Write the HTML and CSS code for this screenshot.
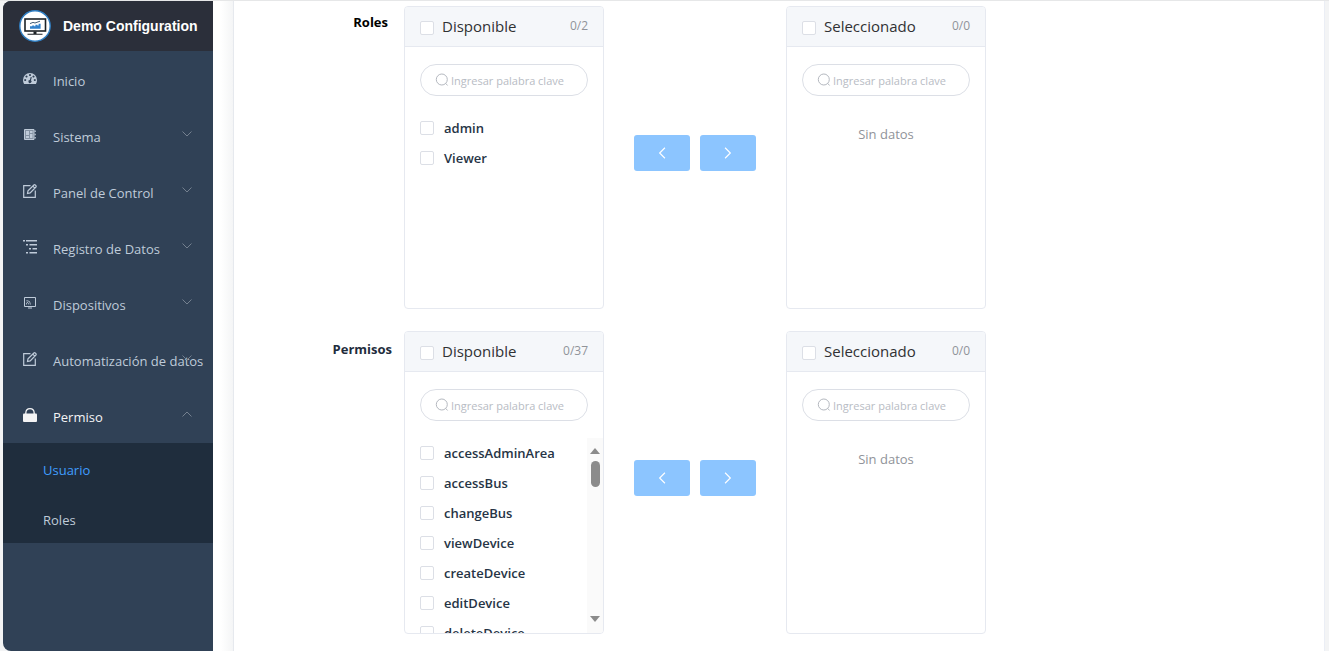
FILE: index.html
```html
<!DOCTYPE html>
<html lang="es">
<head>
  <meta charset="UTF-8" />
  <meta name="viewport" content="width=device-width, initial-scale=1.0"/>
  <title>Demo Configuration</title>
  <link rel="stylesheet" href="styles.css">
</head>
<body>
  <svg class="sprite" xmlns="http://www.w3.org/2000/svg">
    <symbol id="arrow" viewBox="0 0 12 12"><path d="M1.500 3.500 6 8l4.500-4.500" fill="none" stroke="currentColor"/></symbol>
    <symbol id="edit" viewBox="0 0 14 14"><path d="M7.500 1.700H.7v11.600h11.600V6.500M4.500 9.500l.5-2.700L10.900 1q.7-.6 1.300 0l.7.7q.6.6 0 1.300L7.200 8.900zM9.800 2.200l2 2" fill="none" stroke="currentColor" stroke-width="1.200"/></symbol>
    <symbol id="search" viewBox="0 0 14 14"><circle cx="6.800" cy="6.500" r="5.500" fill="none" stroke="currentColor"/><path d="m10.600 10.300 2 2.200" stroke="currentColor"/></symbol>
  </svg>

  <div class="app">
    <aside class="sidebar">
      <a class="brand" href="#">
        <svg class="logo" viewBox="0 0 32 32">
          <circle cx="16" cy="16" r="15.200" fill="#fff" stroke="#2f7fc4" stroke-width="1.400"/>
          <rect x="6" y="9" width="20.500" height="12" fill="#fff" stroke="#1d2226" stroke-width="1.600"/>
          <path d="M14.500 21.500h3V24h-3zM8.500 23.700h15v1h-15z" fill="#1d2226"/>
          <path d="M11 18.800v-2.600h2.200v-.8h2v.8h1.200v-1.400h2v.8h1.200v-1.800h2v5z" fill="#3181cc"/>
          <path d="m11 13.600 3-1.200 2 .6 5-1.800" fill="none" stroke="#2b4966" stroke-width=".9"/>
        </svg>
        <h1>Demo Configuration</h1>
      </a>
      <nav>
        <a class="item" href="#">
          <svg class="icon" viewBox="0 0 16 16"><path fill="currentColor" fill-rule="evenodd" d="M8 1a8 8 0 0 0-8 8q0 2.600 1.200 4.600h13.600Q16 11.600 16 9a8 8 0 0 0-8-8zM8 2.300a1.200 1.200 0 1 0 .01 0zM4 3.900a1.200 1.200 0 1 0 .01 0zM12 3.900a1.200 1.200 0 1 0 .01 0zM2.500 7.900a1.200 1.200 0 1 0 .01 0zM13.500 7.900a1.200 1.200 0 1 0 .01 0zM8.800 5.800l-1 3.300a1.800 1.800 0 1 0 1.300.4l1-3.400z"/></svg>
          <span>Inicio</span>
        </a>
        <a class="item" href="#">
          <svg class="icon" viewBox="0 0 14 14"><path d="M1.500 1.500h9.500v10H1.500z" fill="#8593a4" stroke="currentColor"/><path d="M3 3h3v4H3zM7 3h2.500v2H7zM7 6h2.500v4H7zM3 8h3v2H3zM11.500 2.500h1.300V4h-1.300zM11.500 5.700h1.300v1.500h-1.300zM11.500 9h1.300v1.500h-1.300z" fill="currentColor"/></svg>
          <span>Sistema</span>
          <svg class="arrow"><use href="#arrow"/></svg>
        </a>
        <a class="item" href="#">
          <svg class="icon"><use href="#edit"/></svg>
          <span>Panel de Control</span>
          <svg class="arrow"><use href="#arrow"/></svg>
        </a>
        <a class="item" href="#">
          <svg class="icon" viewBox="0 0 14 14"><path d="M0 0h2v1.500H0zM3 0h11v1.500H3zM3 4h2v1.500H3zM6.500 4H14v1.500H6.500zM6 8h2v1.500H6zM9.500 8H14v1.500H9.500zM3 12h2v1.500H3zM6.500 12H14v1.500H6.500z" fill="currentColor"/></svg>
          <span>Registro de Datos</span>
          <svg class="arrow"><use href="#arrow"/></svg>
        </a>
        <a class="item" href="#">
          <svg class="icon" viewBox="0 0 14 14"><path d="M1.500 1.500h11v9h-11zM5 12h4" fill="none" stroke="currentColor"/><path d="M3.500 8.500V7M3.500 4.500q4 0 4 4M3.500 6q2 .3 2.300 2.500" fill="none" stroke="currentColor" stroke-width=".8"/></svg>
          <span>Dispositivos</span>
          <svg class="arrow"><use href="#arrow"/></svg>
        </a>
        <a class="item" href="#">
          <svg class="icon"><use href="#edit"/></svg>
          <span>Automatización de datos</span>
          <svg class="arrow"><use href="#arrow"/></svg>
        </a>
        <a class="item open" href="#">
          <svg class="icon" viewBox="0 0 14 14"><path d="M1 5.500h12q1 0 1 1V13q0 1-1 1H1q-1 0-1-1V6.500q0-1 1-1z" fill="currentColor"/><path d="M2.800 6V5Q3 .7 7 .7T11.200 5v1" fill="none" stroke="currentColor" stroke-width="1.300"/></svg>
          <span>Permiso</span>
          <svg class="arrow"><use href="#arrow"/></svg>
        </a>
        <div class="submenu">
          <a class="active" href="#">Usuario</a>
          <a href="#">Roles</a>
        </div>
      </nav>
    </aside>

    <main class="card">
      <div class="form-row">
        <div class="form-label roles">Roles</div>
        <div class="transfer">
          <section class="panel">
            <header>
              <input type="checkbox" id="rolesAll"><label for="rolesAll">Disponible</label>
              <span class="count">0/2</span>
            </header>
            <div class="search">
              <svg><use href="#search"/></svg>
              <input type="text" placeholder="Ingresar palabra clave" aria-label="Buscar roles">
            </div>
            <div class="list">
              <label><input type="checkbox">admin</label>
              <label><input type="checkbox">Viewer</label>
            </div>
          </section>
          <div class="buttons">
            <button type="button" aria-label="Quitar" disabled><svg class="left"><use href="#arrow"/></svg></button>
            <button type="button" aria-label="Agregar" disabled><svg class="right"><use href="#arrow"/></svg></button>
          </div>
          <section class="panel">
            <header>
              <input type="checkbox" id="rolesSel"><label for="rolesSel">Seleccionado</label>
              <span class="count">0/0</span>
            </header>
            <div class="search">
              <svg><use href="#search"/></svg>
              <input type="text" placeholder="Ingresar palabra clave" aria-label="Buscar roles seleccionados">
            </div>
            <p class="empty">Sin datos</p>
          </section>
        </div>
      </div>

      <div class="form-row">
        <div class="form-label">Permisos</div>
        <div class="transfer">
          <section class="panel">
            <header>
              <input type="checkbox" id="permAll"><label for="permAll">Disponible</label>
              <span class="count">0/37</span>
            </header>
            <div class="search">
              <svg><use href="#search"/></svg>
              <input type="text" placeholder="Ingresar palabra clave" aria-label="Buscar permisos">
            </div>
            <div class="scroll">
              <div class="list">
                <label><input type="checkbox">accessAdminArea</label>
                <label><input type="checkbox">accessBus</label>
                <label><input type="checkbox">changeBus</label>
                <label><input type="checkbox">viewDevice</label>
                <label><input type="checkbox">createDevice</label>
                <label><input type="checkbox">editDevice</label>
                <label><input type="checkbox">deleteDevice</label>
              </div>
              <div class="scrollbar">
                <svg viewBox="0 0 10 6"><path d="M0 6 5 0l5 6z"/></svg>
                <div class="thumb"></div>
                <svg class="down" viewBox="0 0 10 6"><path d="M0 0 5 6l5-6z"/></svg>
              </div>
            </div>
          </section>
          <div class="buttons">
            <button type="button" aria-label="Quitar" disabled><svg class="left"><use href="#arrow"/></svg></button>
            <button type="button" aria-label="Agregar" disabled><svg class="right"><use href="#arrow"/></svg></button>
          </div>
          <section class="panel">
            <header>
              <input type="checkbox" id="permSel"><label for="permSel">Seleccionado</label>
              <span class="count">0/0</span>
            </header>
            <div class="search">
              <svg><use href="#search"/></svg>
              <input type="text" placeholder="Ingresar palabra clave" aria-label="Buscar permisos seleccionados">
            </div>
            <p class="empty">Sin datos</p>
          </section>
        </div>
      </div>
    </main>
  </div>
</body>
</html>
```
FILE: styles.css
```css
* {
  box-sizing: border-box;
}
body {
  margin: 0;
  font-family: 'Open Sans', 'Noto Sans', sans-serif;
  font-size: 13px;
  color: #303133;
  background: #f3f4f5;
  height: 100vh;
  overflow: hidden;
}
a {
  color: inherit;
  text-decoration: none;
}
.sprite {
  display: none;
}
.app {
  display: flex;
  height: 100%;
  padding: 0 4px 0 3px;
  border-top: 1px solid #e6e7e8;
}

/* sidebar */
.sidebar {
  flex: 0 0 210px;
  background: #304156;
  color: #bfcbd9;
  border-radius: 8px 0 0 8px;
  overflow: hidden;
}
.brand {
  display: flex;
  align-items: center;
  gap: 12px;
  height: 50px;
  padding-left: 16px;
  background: #2b2f3a;
}
.logo {
  width: 32px;
  height: 32px;
}
.brand h1 {
  margin: 0;
  color: #fff;
  font: bold 14px 'Liberation Sans', Arial, sans-serif;
  white-space: nowrap;
}
.item {
  position: relative;
  display: flex;
  align-items: center;
  gap: 16px;
  height: 56px;
  padding-left: 20px;
  white-space: nowrap;
}
.item span {
  padding-top: 4px;
}
.icon {
  width: 14px;
  height: 14px;
}
.arrow {
  position: absolute;
  right: 20px;
  top: 21px;
  width: 12px;
  height: 12px;
  color: #74808f;
}
.open {
  color: #f4f4f5;
}
.open .arrow {
  transform: rotate(180deg);
}
.submenu {
  background: #1f2d3d;
}
.submenu a {
  display: block;
  height: 50px;
  padding: 4px 0 0 40px;
  line-height: 46px;
}
.submenu .active {
  color: #409eff;
}

/* form */
.card {
  flex: 1;
  min-width: 0;
  padding: 5px 0 0 20px;
  background: linear-gradient(to right, #fff 8px, #f4f5f6 20px, #e6e9ee 20px, #e6e9ee 21px, #fff 21px);
  border-right: 1px solid #ebeef5;
}
.form-row {
  display: flex;
  margin-bottom: 22px;
}
.form-label {
  flex: 0 0 171px;
  padding: 8px 12px 0 0;
  line-height: 20px;
  font-weight: 700;
  color: #1f2d3d;
  text-align: right;
}
.form-label.roles {
  padding: 6px 16px 0 0;
  color: #000;
}
.transfer {
  display: flex;
  align-items: center;
}
.panel {
  display: flex;
  flex-direction: column;
  width: 200px;
  height: 303px;
  border: 1px solid #e6e9f0;
  border-radius: 4px;
  overflow: hidden;
}
.panel header {
  display: flex;
  align-items: center;
  height: 40px;
  padding: 0 15px;
  background: #f5f7fa;
  border-bottom: 1px solid #e6e9f0;
}
.panel header label {
  margin-left: 8px;
  padding-bottom: 2px;
  font-size: 15px;
}
.count {
  margin-left: auto;
  padding-bottom: 2px;
  font-size: 12px;
  color: #909399;
}
input[type="checkbox"] {
  appearance: none;
  flex: none;
  width: 14px;
  height: 14px;
  margin: 0;
  border: 1px solid #dcdfe6;
  border-radius: 2px;
  background: #fff;
}
.panel header input {
  margin-top: 3px;
}
.search {
  position: relative;
  flex: none;
  margin: 17px 15px;
}
.search svg {
  position: absolute;
  left: 15px;
  top: 9px;
  width: 14px;
  height: 14px;
  color: #b4b8bf;
}
.search input {
  display: block;
  width: 100%;
  height: 32px;
  padding: 0 8px 0 30px;
  border: 1px solid #dcdfe6;
  border-radius: 16px;
  outline: none;
  font-family: inherit;
  font-size: 11px;
}
.search input::placeholder {
  color: #b8bcc4;
}
.list {
  flex: 1;
  min-height: 0;
}
.list label {
  display: flex;
  align-items: center;
  gap: 10px;
  height: 30px;
  padding-left: 15px;
  font-weight: 600;
  color: #263445;
}
.scroll {
  display: flex;
  flex: 1;
  min-height: 0;
  overflow: hidden;
}
.scrollbar {
  display: flex;
  flex-direction: column;
  align-items: center;
  width: 16px;
  padding: 10px 0 11px;
  background: #fafafa;
}
.scrollbar svg {
  width: 10px;
  height: 6px;
  fill: #8b8b8b;
}
.scrollbar .down {
  margin-top: auto;
}
.thumb {
  width: 9px;
  height: 26px;
  margin-top: 7px;
  border-radius: 5px;
  background: #8b8b8b;
}
.empty {
  margin: 0;
  padding-top: 6px;
  line-height: 30px;
  color: #909399;
  text-align: center;
}
.buttons {
  display: flex;
  gap: 10px;
  padding: 0 30px 10px;
}
.buttons button {
  display: flex;
  align-items: center;
  justify-content: center;
  width: 56px;
  height: 36px;
  padding: 0;
  border: 0;
  border-radius: 3px;
  background: #8cc5ff;
  color: #fff;
}
.buttons svg {
  width: 14px;
  height: 14px;
}
.left {
  transform: rotate(90deg);
}
.right {
  transform: rotate(-90deg);
}
```
